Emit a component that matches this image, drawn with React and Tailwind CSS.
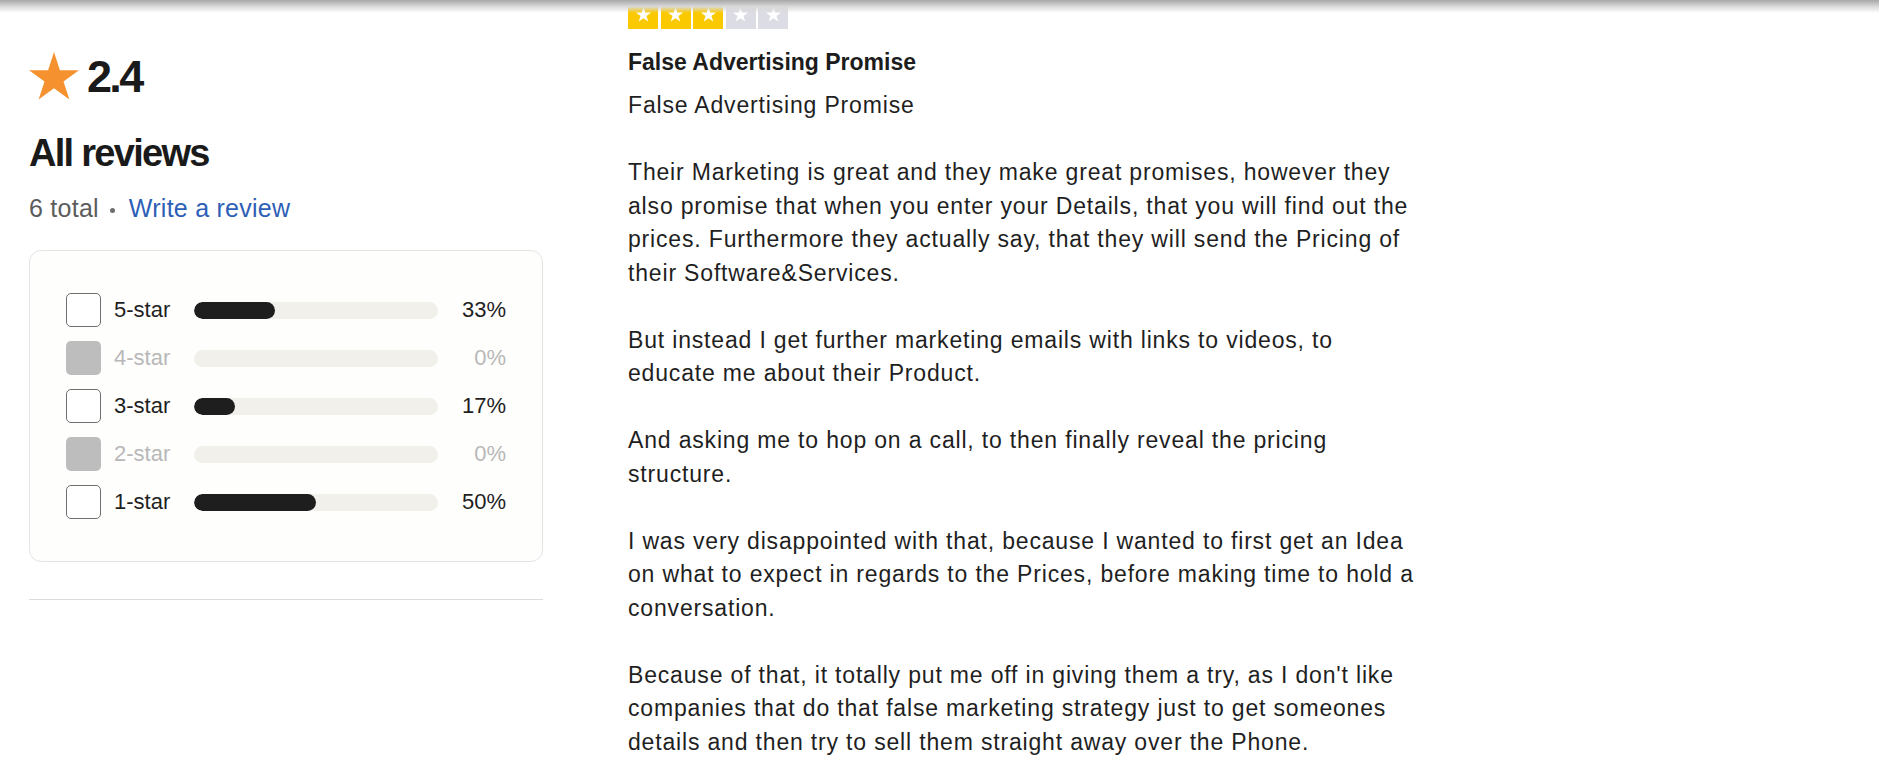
import React from "react";

const breakdown = [
  { label: "5-star", pct: 33 },
  { label: "4-star", pct: 0 },
  { label: "3-star", pct: 17 },
  { label: "2-star", pct: 0 },
  { label: "1-star", pct: 50 },
];

const review = {
  rating: 3,
  title: "False Advertising Promise",
  body: `False Advertising Promise

Their Marketing is great and they make great promises, however they also promise that when you enter your Details, that you will find out the prices. Furthermore they actually say, that they will send the Pricing of their Software&Services.

But instead I get further marketing emails with links to videos, to educate me about their Product.

And asking me to hop on a call, to then finally reveal the pricing structure.

I was very disappointed with that, because I wanted to first get an Idea on what to expect in regards to the Prices, before making time to hold a conversation.

Because of that, it totally put me off in giving them a try, as I don't like companies that do that false marketing strategy just to get someones details and then try to sell them straight away over the Phone.`,
};

function BigStar() {
  return (
    <svg width="50" height="48" viewBox="0 0 50 48" className="shrink-0">
      <polygon
        fill="#f5922f"
        points="25,0 30.9,18.2 50,18.2 34.5,29.4 40.4,47.6 25,36.3 9.6,47.6 15.5,29.4 0,18.2 19.1,18.2"
      />
    </svg>
  );
}

function SmallStar() {
  return (
    <svg width="17" height="17" viewBox="0 0 24 24">
      <polygon
        fill="#ffffff"
        points="12,1.5 14.6,9.3 22.8,9.3 16.2,14.2 18.7,22 12,17.2 5.3,22 7.8,14.2 1.2,9.3 9.4,9.3"
      />
    </svg>
  );
}

function RatingRow({ label, pct }) {
  const empty = pct === 0;
  return (
    <div className="flex h-[34px] items-center">
      <div
        className={
          empty
            ? "h-[34px] w-[35px] shrink-0 rounded-[5px] bg-[#bdbdbd]"
            : "h-[34px] w-[35px] shrink-0 rounded-[5px] border border-[#6f6f6f] bg-white"
        }
      />
      <span
        className={`ml-[13px] w-[80px] shrink-0 text-[22px] leading-none ${
          empty ? "text-[#b8b8b8]" : "text-[#1f1f1f]"
        }`}
      >
        {label}
      </span>
      <div className="h-[17px] flex-1 overflow-hidden rounded-full bg-[#f1f0ea]">
        <div className="h-full rounded-full bg-[#1e1e1e]" style={{ width: `${pct}%` }} />
      </div>
      <span
        className={`w-[68px] shrink-0 text-right text-[22px] leading-none ${
          empty ? "text-[#b8b8b8]" : "text-[#1f1f1f]"
        }`}
      >
        {pct}%
      </span>
    </div>
  );
}

export default function App() {
  return (
    <div className="relative min-h-screen overflow-hidden bg-white font-['Liberation_Sans',Arial,sans-serif] text-[#1c1c1c]">
      <div className="pointer-events-none absolute inset-x-0 top-0 z-10 h-[13px] bg-linear-to-b from-[#a8a8a8] via-[#d9d9d9] to-transparent" />

      <div className="flex gap-[85px] pl-[29px]">
        <aside className="w-[514px] shrink-0 pt-[52px]">
          <div className="flex items-center gap-[8px]">
            <BigStar />
            <span className="text-[45px] font-bold leading-[45px] tracking-[-0.06em] text-[#1a1a1a]">2.4</span>
          </div>

          <h2 className="mt-[34px] text-[38px] font-bold leading-none tracking-[-0.045em] text-[#1a1a1a]">
            All reviews
          </h2>

          <div className="mt-[23px] flex items-center text-[25px] leading-[26px] tracking-[0.01em]">
            <span className="text-[#5c5c5c]">6 total</span>
            <span className="ml-[11px] mr-[14px] mt-[4px] h-[5px] w-[5px] rounded-full bg-[#6d6d6d]" />
            <a href="#" className="text-[#2e5fb7]">
              Write a review
            </a>
          </div>

          <div className="mt-[29px] rounded-[12px] border border-[#e4e4e4] bg-[#fefefd] px-[36px] pb-[42px] pt-[42px]">
            <div className="flex flex-col gap-[14px]">
              {breakdown.map((row) => (
                <RatingRow key={row.label} {...row} />
              ))}
            </div>
          </div>

          <div className="mt-[37px] h-px bg-[#dcdcdc]" />
        </aside>

        <main className="-mt-px w-[792px]">
          <div className="flex gap-[2.5px]">
            {[1, 2, 3, 4, 5].map((n) => (
              <div
                key={n}
                className={`flex h-[30px] w-[30px] items-center justify-center ${
                  n <= review.rating ? "bg-[#fbc900]" : "bg-[#dcdce4]"
                }`}
              >
                <SmallStar />
              </div>
            ))}
          </div>

          <h3 className="mt-[17px] text-[23px] font-bold leading-[32px]">{review.title}</h3>

          <p className="mt-[11px] whitespace-pre-line text-[23px] leading-[33.5px] tracking-[0.036em] text-[#1f1f1f]">
            {review.body}
          </p>
        </main>
      </div>
    </div>
  );
}
